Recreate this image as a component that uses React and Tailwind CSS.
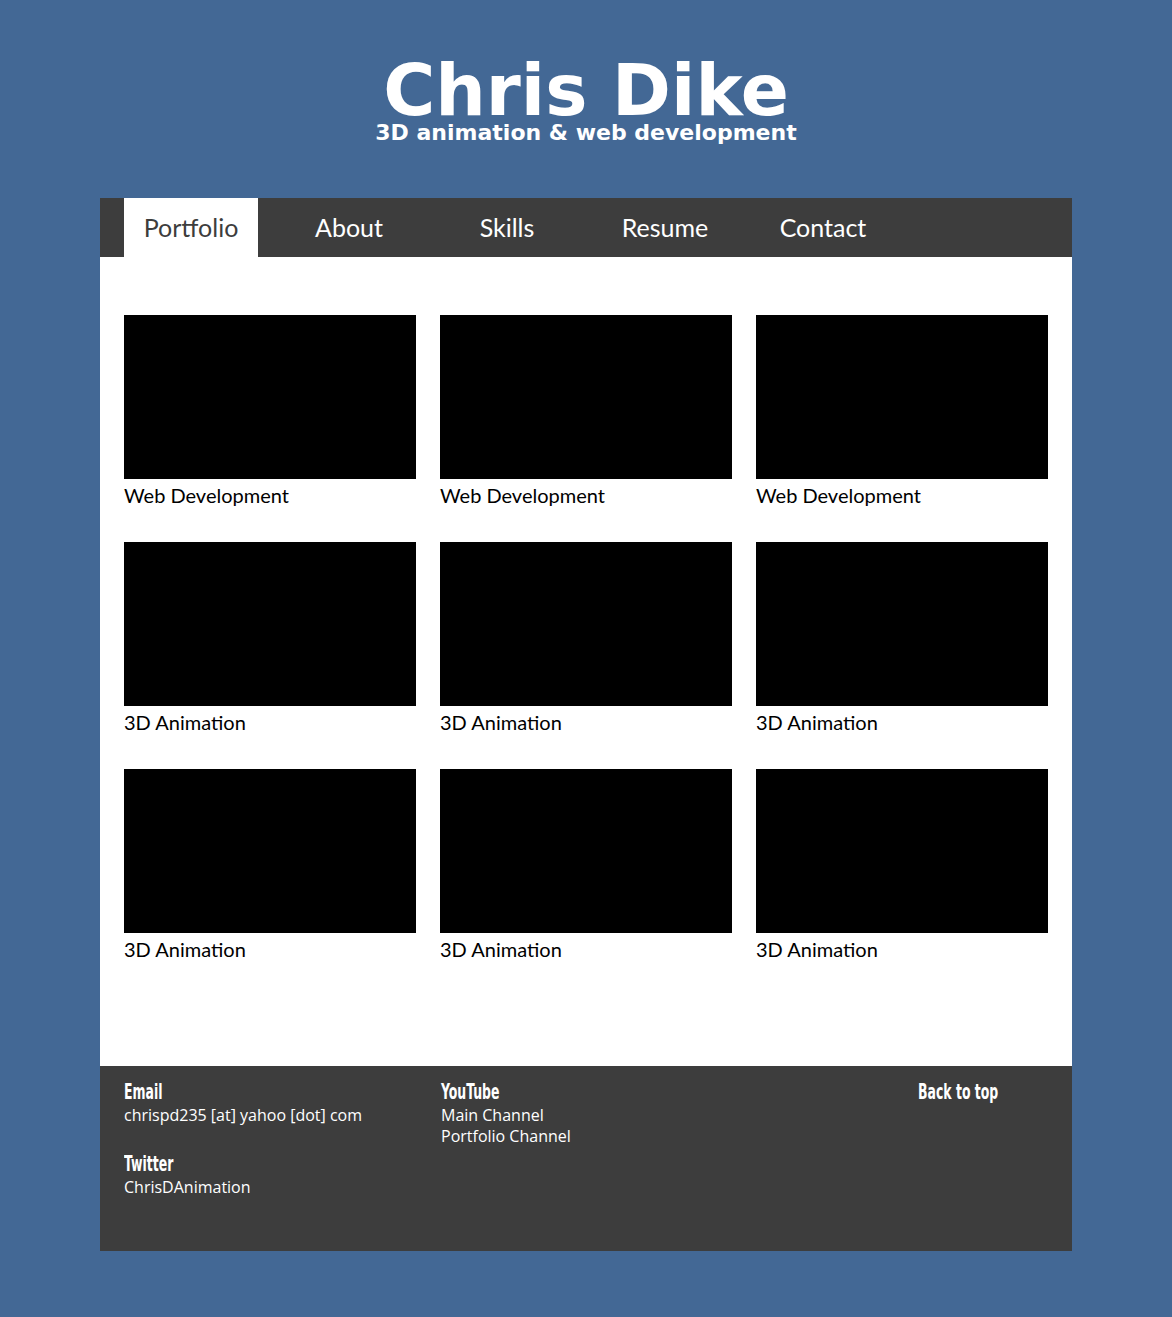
import React from "react";

const NAV = ["Portfolio", "About", "Skills", "Resume", "Contact"];

const WORKS = [
  "Web Development",
  "Web Development",
  "Web Development",
  "3D Animation",
  "3D Animation",
  "3D Animation",
  "3D Animation",
  "3D Animation",
  "3D Animation",
];

// condensed headline look for the footer titles
function FootHead({ children, className = "" }) {
  return (
    <h3 className={`h-[26px] ${className}`}>
      <span className="inline-block origin-left scale-x-[0.66] font-['DejaVu_Sans_Condensed','DejaVu_Sans',sans-serif] font-bold text-[21px] leading-[26px]">
        {children}
      </span>
    </h3>
  );
}

export default function App() {
  return (
    <div className="min-h-[1317px] bg-[#436895] pt-[60px] pb-[66px]">
      {/* header */}
      <header className="flex flex-col items-center text-white font-['DejaVu_Sans',sans-serif] font-bold">
        <h1 className="text-[71px] leading-[62px]">Chris Dike</h1>
        <p className="text-[22px] leading-[22px]">3D animation &amp; web development</p>
      </header>

      <div className="mx-[100px] mt-[54px]">
        {/* nav */}
        <nav className="flex h-[59px] bg-[#3d3d3d] pl-[12px] font-['Lato',sans-serif] text-[25px]">
          {NAV.map((item, i) => (
            <div key={item} className="w-[158px] flex justify-center">
              <a
                className={
                  i === 0
                    ? "w-[134px] flex items-center justify-center bg-white text-[#3d3d3d] pt-[1px]"
                    : "flex items-center text-white pt-[1px]"
                }
              >
                {item}
              </a>
            </div>
          ))}
        </nav>

        {/* portfolio grid */}
        <main className="bg-white px-[24px] pt-[58px] pb-[105px]">
          <div className="grid grid-cols-3 gap-x-[24px] gap-y-[35px]">
            {WORKS.map((label, i) => (
              <div key={i}>
                <div className="h-[164px] bg-black" />
                <p className="mt-[4px] text-[20px] leading-[24px] text-black font-['Lato',sans-serif]">
                  {label}
                </p>
              </div>
            ))}
          </div>
        </main>

        {/* footer */}
        <footer className="h-[185px] bg-[#3d3d3d] pl-[24px] pt-[13px] text-white flex font-['Open_Sans',sans-serif] text-[16px] leading-[21px]">
          <div className="w-[317px]">
            <FootHead>Email</FootHead>
            <p>chrispd235 [at] yahoo [dot] com</p>
            <FootHead className="mt-[25px]">Twitter</FootHead>
            <p>ChrisDAnimation</p>
          </div>
          <div className="flex-1">
            <FootHead>YouTube</FootHead>
            <p>Main Channel</p>
            <p>Portfolio Channel</p>
          </div>
          <div className="w-[154px]">
            <FootHead>Back to top</FootHead>
          </div>
        </footer>
      </div>
    </div>
  );
}
